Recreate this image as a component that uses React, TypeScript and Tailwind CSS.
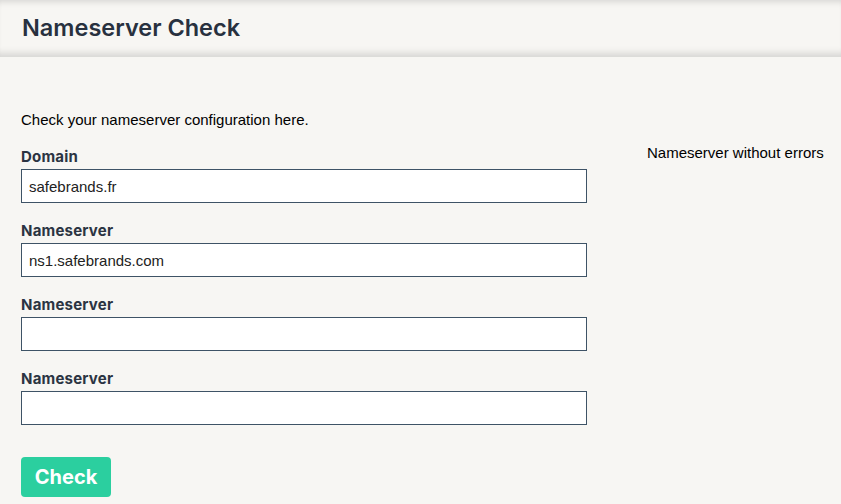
import React from "react";

const fields = [
  { label: "Domain", value: "safebrands.fr" },
  { label: "Nameserver", value: "ns1.safebrands.com" },
  { label: "Nameserver", value: "" },
  { label: "Nameserver", value: "" },
];

const App = () => {
  return (
    <div className="min-h-[504px] bg-[#f7f6f3] font-['Liberation_Sans',Arial,sans-serif] text-[15px] text-black">
      <header className="h-[57px] px-[22px] flex items-center bg-[#f7f6f3] shadow-[inset_0_7px_6px_-5px_rgba(0,0,0,0.13),inset_0_-9px_7px_-5px_rgba(0,0,0,0.13)]">
        <h1 className="font-['Inter',sans-serif] font-semibold text-[23.5px] text-[#28313f] leading-none -mt-[2px]">
          Nameserver Check
        </h1>
      </header>

      <div className="flex px-[21px] pt-[53px]">
        <form className="w-[566px] shrink-0 flex flex-col" onSubmit={(e) => e.preventDefault()}>
          <p className="leading-[20px] mb-[17px]">Check your nameserver configuration here.</p>

          {fields.map((f, i) => (
            <div key={i} className="flex flex-col mb-[18px]">
              <label className="font-['Inter',sans-serif] font-bold text-[15px] tracking-[0.2px] leading-[20px] text-[#2b3442] mb-[2px]">
                {f.label}
              </label>
              <input
                type="text"
                defaultValue={f.value}
                className="h-[34px] w-full bg-white border border-[#3e5366] px-[7px] text-[15px] text-[#222] outline-none"
              />
            </div>
          ))}

          <div className="mt-[14px]">
            <button
              type="submit"
              className="h-[40px] w-[90px] rounded-[4px] bg-[#2bcf9f] text-white font-['Inter',sans-serif] font-bold text-[20px]"
            >
              Check
            </button>
          </div>
        </form>

        <div className="ml-[60px] pt-[33px]">
          <p className="leading-[20px] whitespace-nowrap">Nameserver without errors</p>
        </div>
      </div>
    </div>
  );
};

export default App;
